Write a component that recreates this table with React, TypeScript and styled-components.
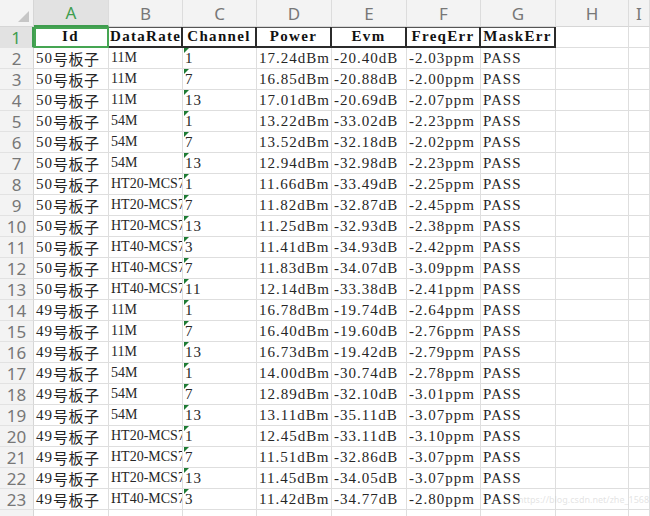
import React from "react";
import styled, { createGlobalStyle, css } from "styled-components";

const Global = createGlobalStyle`
  html, body { margin: 0; padding: 0; background: #ffffff; overflow: hidden; }
  #root { width: 650px; height: 516px; overflow: hidden; }
`;

const COLS = [75, 74, 74, 75, 75, 74, 75, 73];
const LETTERS = ["A", "B", "C", "D", "E", "F", "G", "H", "I"];

const Sheet = styled.div`
  position: relative;
  display: grid;
  grid-template-columns: 34px ${COLS.map((w) => `${w}px`).join(" ")} 1fr;
  grid-template-rows: 27px;
  grid-auto-rows: 21px;
  width: 650px;
  height: 516px;
  overflow: hidden;
  background: #fff;
`;

const Corner = styled.div`
  position: relative;
  background: #f3f3f3;
  border-right: 1px solid #d6d6d6;
  border-bottom: 1px solid #d6d6d6;
  box-sizing: border-box;
  &::after {
    content: "";
    position: absolute;
    right: 4px;
    bottom: 4px;
    width: 0;
    height: 0;
    border-left: 11px solid transparent;
    border-bottom: 11px solid #c6c6c6;
  }
`;

const ColHead = styled.div<{ $active?: boolean }>`
  display: flex;
  align-items: center;
  justify-content: center;
  box-sizing: border-box;
  font-family: "Noto Sans", sans-serif;
  font-size: 17px;
  color: #777;
  background: #f3f3f3;
  border-right: 1px solid #dcdcdc;
  border-bottom: 1px solid #d6d6d6;
  ${(p) =>
    p.$active &&
    css`
      background: #e2e2e2;
      color: #3f9d4f;
      border-bottom: 2px solid #3f9d4f;
    `}
`;

const RowHead = styled.div<{ $active?: boolean }>`
  display: flex;
  align-items: center;
  justify-content: center;
  box-sizing: border-box;
  font-family: "Noto Sans", sans-serif;
  font-size: 17px;
  color: #777;
  background: #f3f3f3;
  border-right: 1px solid #d6d6d6;
  border-bottom: 1px solid #e2e2e2;
  ${(p) =>
    p.$active &&
    css`
      background: #e2e2e2;
      color: #3f9d4f;
      border-right: 2px solid #3f9d4f;
    `}
`;

const Cell = styled.div<{
  $head?: boolean;
  $center?: boolean;
  $selected?: boolean;
  $flag?: boolean;
  $tight?: boolean;
}>`
  position: relative;
  display: flex;
  align-items: center;
  justify-content: ${(p) => (p.$center ? "center" : "flex-start")};
  box-sizing: border-box;
  padding: 0 2px;
  overflow: hidden;
  white-space: nowrap;
  font-family: "Liberation Serif", serif;
  font-size: 15px;
  letter-spacing: 1px;
  color: #262626;
  border-right: 1px solid #dedede;
  border-bottom: 1px solid #dedede;
  ${(p) =>
    p.$tight &&
    css`
      font-size: 14px;
      letter-spacing: 0;
    `}
  ${(p) =>
    p.$head &&
    css`
      font-weight: bold;
      font-size: 15px;
      letter-spacing: 1.3px;
      color: #111;
      padding: 0 1px;
      border-right: 2px solid #2b2b2b;
      border-bottom: 2px solid #2b2b2b;
      box-shadow: inset 0 1px 0 #555;
    `}
  ${(p) =>
    p.$selected &&
    css`
      overflow: visible;
      z-index: 2;
      outline: 2px solid #45a552;
      outline-offset: -2px;
    `}
  ${(p) =>
    p.$flag &&
    css`
      &::before {
        content: "";
        position: absolute;
        left: 1px;
        top: 0;
        width: 0;
        height: 0;
        border-top: 5px solid #1e7b34;
        border-right: 5px solid transparent;
      }
    `}
`;

const Cjk = styled.span`
  font-family: "Noto Sans CJK SC", sans-serif;
  font-size: 15px;
  letter-spacing: 0.5px;
`;

const Watermark = styled.div`
  position: absolute;
  left: 518px;
  top: 493px;
  font-family: "Noto Sans", sans-serif;
  font-size: 9px;
  color: rgba(205, 205, 205, 0.55);
  white-space: nowrap;
  pointer-events: none;
  z-index: 3;
`;

type Row = [string, string, string, string, string, string, string];

const raw: [string, string, string, string, string][] = [
  ["11M", "1", "17.24dBm", "-20.40dB", "-2.03ppm"],
  ["11M", "7", "16.85dBm", "-20.88dB", "-2.00ppm"],
  ["11M", "13", "17.01dBm", "-20.69dB", "-2.07ppm"],
  ["54M", "1", "13.22dBm", "-33.02dB", "-2.23ppm"],
  ["54M", "7", "13.52dBm", "-32.18dB", "-2.02ppm"],
  ["54M", "13", "12.94dBm", "-32.98dB", "-2.23ppm"],
  ["HT20-MCS7", "1", "11.66dBm", "-33.49dB", "-2.25ppm"],
  ["HT20-MCS7", "7", "11.82dBm", "-32.87dB", "-2.45ppm"],
  ["HT20-MCS7", "13", "11.25dBm", "-32.93dB", "-2.38ppm"],
  ["HT40-MCS7", "3", "11.41dBm", "-34.93dB", "-2.42ppm"],
  ["HT40-MCS7", "7", "11.83dBm", "-34.07dB", "-3.09ppm"],
  ["HT40-MCS7", "11", "12.14dBm", "-33.38dB", "-2.41ppm"],
  ["11M", "1", "16.78dBm", "-19.74dB", "-2.64ppm"],
  ["11M", "7", "16.40dBm", "-19.60dB", "-2.76ppm"],
  ["11M", "13", "16.73dBm", "-19.42dB", "-2.79ppm"],
  ["54M", "1", "14.00dBm", "-30.74dB", "-2.78ppm"],
  ["54M", "7", "12.89dBm", "-32.10dB", "-3.01ppm"],
  ["54M", "13", "13.11dBm", "-35.11dB", "-3.07ppm"],
  ["HT20-MCS7", "1", "12.45dBm", "-33.11dB", "-3.10ppm"],
  ["HT20-MCS7", "7", "11.51dBm", "-32.86dB", "-3.07ppm"],
  ["HT20-MCS7", "13", "11.45dBm", "-34.05dB", "-3.07ppm"],
  ["HT40-MCS7", "3", "11.42dBm", "-34.77dB", "-2.80ppm"],
];

const rows: Row[] = raw.map((r, i) => [i < 12 ? "50" : "49", r[0], r[1], r[2], r[3], r[4], "PASS"]);

const HEAD = ["Id", "DataRate", "Channel", "Power", "Evm", "FreqErr", "MaskErr"];

export default function App() {
  return (
    <>
      <Global />
      <Sheet>
        <Corner />
        {LETTERS.map((l) => (
          <ColHead key={l} $active={l === "A"}>
            {l}
          </ColHead>
        ))}

        <RowHead $active>1</RowHead>
        {HEAD.map((h, i) => (
          <Cell key={h} $head $center={i !== 1} $selected={i === 0}>
            {h}
          </Cell>
        ))}
        <Cell />
        <Cell />

        {rows.map((r, ri) => (
          <React.Fragment key={ri}>
            <RowHead>{ri + 2}</RowHead>
            <Cell>
              {r[0]}
              <Cjk>号板子</Cjk>
            </Cell>
            <Cell $tight>{r[1]}</Cell>
            <Cell $flag>{r[2]}</Cell>
            <Cell>{r[3]}</Cell>
            <Cell>{r[4]}</Cell>
            <Cell>{r[5]}</Cell>
            <Cell>{r[6]}</Cell>
            <Cell />
            <Cell />
          </React.Fragment>
        ))}

        <RowHead />
        {LETTERS.map((l) => (
          <Cell key={"e" + l} />
        ))}
        <Watermark>https://blog.csdn.net/zhe_1568</Watermark>
      </Sheet>
    </>
  );
}
